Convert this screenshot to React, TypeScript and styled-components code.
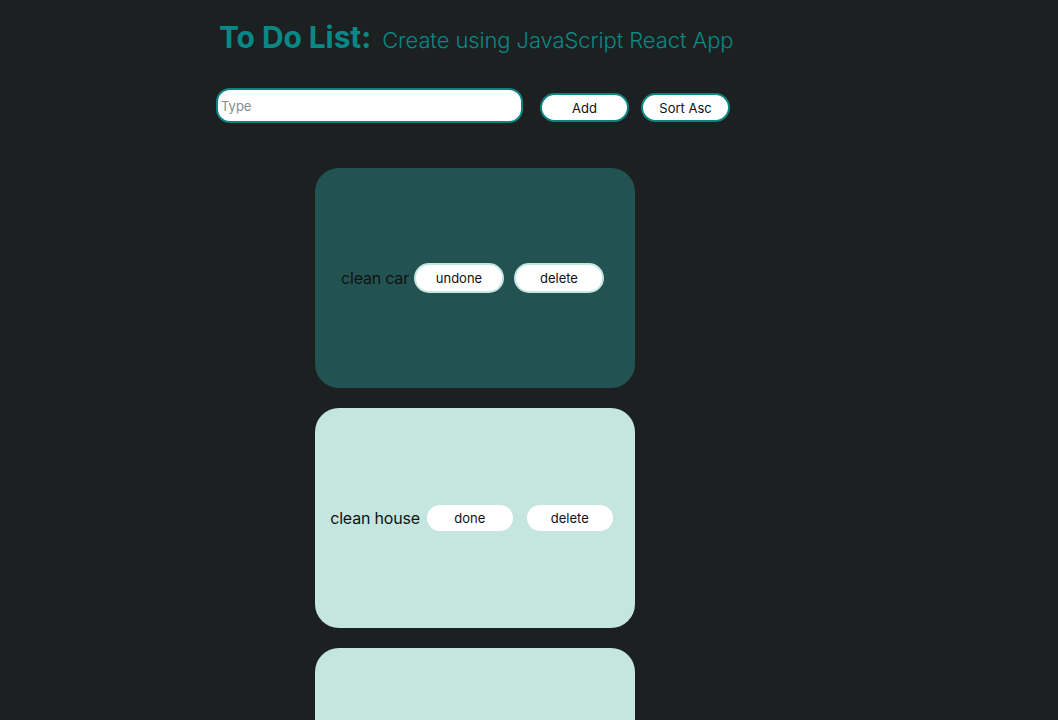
import { useState } from 'react';
import styled, { createGlobalStyle } from 'styled-components';

const GlobalStyle = createGlobalStyle`
  html, body {
    margin: 0;
    background: #1c2021;
    font-family: Inter, "Noto Sans", sans-serif;
  }
`;

interface Todo {
  id: number;
  text: string;
  done: boolean;
}

const Page = styled.div`
  padding: 19px 0 0 216px;
  min-height: 720px;
  box-sizing: border-box;
`;

const Header = styled.header`
  display: flex;
  align-items: baseline;
  gap: 11px;
  padding-left: 3px;
  color: #0a8885;
`;

const Title = styled.h1`
  margin: 0;
  font-size: 30px;
  font-weight: 700;
  letter-spacing: -0.1px;
`;

const Subtitle = styled.span`
  font-size: 22px;
  font-weight: 300;
  letter-spacing: -0.1px;
`;

const Toolbar = styled.div`
  display: flex;
  align-items: flex-end;
  gap: 12px;
  margin-top: 33px;
`;

const Input = styled.input`
  width: 307px;
  height: 35px;
  box-sizing: border-box;
  border: 2px solid #0a8582;
  border-radius: 14px;
  padding: 0 3px;
  font-family: inherit;
  font-size: 13px;
  outline: none;
  margin-right: 5px;

  &::placeholder {
    color: #8a8a8a;
  }
`;

const PillButton = styled.button<{ $edge: string }>`
  width: 89px;
  height: 29px;
  box-sizing: border-box;
  border: 2px solid ${({ $edge }) => $edge};
  border-radius: 15px;
  background: #fff;
  color: #111;
  font-family: inherit;
  font-size: 13px;
  cursor: pointer;
  margin-bottom: 1px;
`;

const List = styled.ul`
  list-style: none;
  margin: 45px 0 0 99px;
  padding: 0;
  display: flex;
  flex-direction: column;
  gap: 20px;
`;

const Card = styled.li<{ $done: boolean }>`
  width: 320px;
  height: 220px;
  border-radius: 24px;
  background: ${({ $done }) => ($done ? '#225352' : '#c4e6df')};
  display: flex;
  align-items: center;
  justify-content: center;
`;

const Label = styled.span`
  font-size: 16px;
  color: #111;
  letter-spacing: -0.2px;
`;

const CardButton = styled.button`
  width: 90px;
  height: 30px;
  box-sizing: border-box;
  border: 2px solid #c4e6df;
  border-radius: 15px;
  background: #fff;
  color: #111;
  font-family: inherit;
  font-size: 13px;
  margin: 0 5px;
  cursor: pointer;
`;

export default function App() {
  const [todos, setTodos] = useState<Todo[]>([
    { id: 1, text: 'clean car', done: true },
    { id: 2, text: 'clean house', done: false },
    { id: 3, text: 'buy milk', done: false },
  ]);
  const [draft, setDraft] = useState('');

  const add = () => {
    if (!draft.trim()) return;
    setTodos([...todos, { id: Date.now(), text: draft, done: false }]);
    setDraft('');
  };

  const sortAsc = () =>
    setTodos([...todos].sort((a, b) => a.text.localeCompare(b.text)));

  const toggle = (id: number) =>
    setTodos(todos.map((t) => (t.id === id ? { ...t, done: !t.done } : t)));

  const remove = (id: number) => setTodos(todos.filter((t) => t.id !== id));

  return (
    <>
      <GlobalStyle />
      <Page>
        <Header>
          <Title>To Do List:</Title>
          <Subtitle>Create using JavaScript React App</Subtitle>
        </Header>

        <Toolbar>
          <Input
            placeholder="Type"
            value={draft}
            onChange={(e) => setDraft(e.target.value)}
          />
          <PillButton $edge="#0a8582" onClick={add}>
            Add
          </PillButton>
          <PillButton $edge="#0a8582" onClick={sortAsc}>
            Sort Asc
          </PillButton>
        </Toolbar>

        <List>
          {todos.map((t) => (
            <Card key={t.id} $done={t.done}>
              <Label>{t.text}</Label>
              <CardButton onClick={() => toggle(t.id)}>
                {t.done ? 'undone' : 'done'}
              </CardButton>
              <CardButton onClick={() => remove(t.id)}>delete</CardButton>
            </Card>
          ))}
        </List>
      </Page>
    </>
  );
}
